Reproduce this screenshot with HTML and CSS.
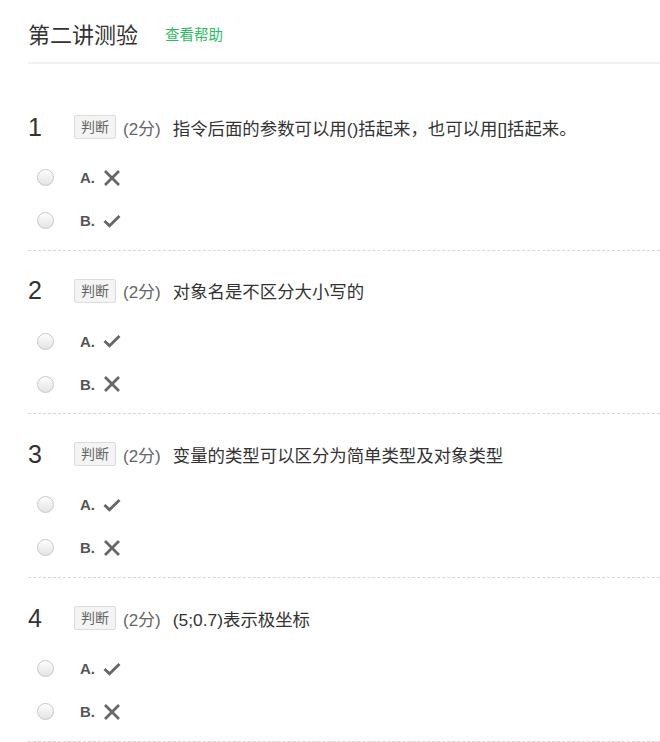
FILE: index.html
```html
<!DOCTYPE html>
<html lang="zh-CN">
  <head>
    <meta charset="UTF-8" />
    <meta name="viewport" content="width=device-width, initial-scale=1.0" />
    <title>第二讲测验</title>
    <link rel="stylesheet" href="styles.css">
  </head>
  <body>
    <div class="page">
      <div class="header">
        <h2 class="title">第二讲测验</h2>
        <a class="help" href="#">查看帮助</a>
      </div>

      <div class="list">
        <div class="question">
          <div class="q-head">
            <span class="q-num">1</span>
            <span class="tag">判断</span>
            <span class="score">(2分)</span>
            <span class="q-text">指令后面的参数可以用()括起来，也可以用[]括起来。</span>
          </div>
          <div class="option">
            <span class="radio"></span><span class="opt-label">A.</span>
            <svg class="icon" viewBox="0 0 20 20"><path d="M3 3L17 17M17 3L3 17" /></svg>
          </div>
          <div class="option">
            <span class="radio"></span><span class="opt-label">B.</span>
            <svg class="icon" viewBox="0 0 20 20"><path d="M2.5 10L7.5 14.8L17.5 5" /></svg>
          </div>
        </div>

        <div class="question">
          <div class="q-head">
            <span class="q-num">2</span>
            <span class="tag">判断</span>
            <span class="score">(2分)</span>
            <span class="q-text">对象名是不区分大小写的</span>
          </div>
          <div class="option">
            <span class="radio"></span><span class="opt-label">A.</span>
            <svg class="icon" viewBox="0 0 20 20"><path d="M2.5 10L7.5 14.8L17.5 5" /></svg>
          </div>
          <div class="option">
            <span class="radio"></span><span class="opt-label">B.</span>
            <svg class="icon" viewBox="0 0 20 20"><path d="M3 3L17 17M17 3L3 17" /></svg>
          </div>
        </div>

        <div class="question">
          <div class="q-head">
            <span class="q-num">3</span>
            <span class="tag">判断</span>
            <span class="score">(2分)</span>
            <span class="q-text">变量的类型可以区分为简单类型及对象类型</span>
          </div>
          <div class="option">
            <span class="radio"></span><span class="opt-label">A.</span>
            <svg class="icon" viewBox="0 0 20 20"><path d="M2.5 10L7.5 14.8L17.5 5" /></svg>
          </div>
          <div class="option">
            <span class="radio"></span><span class="opt-label">B.</span>
            <svg class="icon" viewBox="0 0 20 20"><path d="M3 3L17 17M17 3L3 17" /></svg>
          </div>
        </div>

        <div class="question">
          <div class="q-head">
            <span class="q-num">4</span>
            <span class="tag">判断</span>
            <span class="score">(2分)</span>
            <span class="q-text">(5;0.7)表示极坐标</span>
          </div>
          <div class="option">
            <span class="radio"></span><span class="opt-label">A.</span>
            <svg class="icon" viewBox="0 0 20 20"><path d="M2.5 10L7.5 14.8L17.5 5" /></svg>
          </div>
          <div class="option">
            <span class="radio"></span><span class="opt-label">B.</span>
            <svg class="icon" viewBox="0 0 20 20"><path d="M3 3L17 17M17 3L3 17" /></svg>
          </div>
        </div>
      </div>
    </div>
  </body>
</html>
```

FILE: styles.css
```css
body {
  margin: 0;
  background: #fff;
  font-family: "Liberation Sans", "Noto Sans CJK SC", sans-serif;
  color: #333;
}
.page {
  padding-left: 28px;
}
.header {
  height: 64px;
  display: flex;
  align-items: center;
  padding-top: 4px;
  box-sizing: border-box;
  border-bottom: 2px solid #f2f2f2;
}
.title {
  margin: 0;
  font-size: 22px;
  font-weight: normal;
  color: #333;
}
.help {
  margin-left: 27px;
  font-size: 14.5px;
  color: #2bbd5f;
  text-decoration: none;
}
.list {
  margin-top: 23px;
}
.question {
  height: 163.7px;
  box-sizing: border-box;
  padding-top: 26px;
  border-bottom: 1px dashed #d8d8d8;
}
.q-head {
  display: flex;
  align-items: center;
  height: 28px;
  margin-bottom: 15px;
}
.q-num {
  width: 46px;
  font-size: 25px;
  color: #333;
}
.tag {
  box-sizing: border-box;
  height: 24px;
  line-height: 22px;
  padding: 0 6px;
  border: 1px solid #dcdcdc;
  border-radius: 2px;
  background: #f4f4f4;
  font-size: 14px;
  color: #666;
}
.score {
  margin-left: 7px;
  font-size: 17px;
  color: #666;
}
.q-text {
  margin-left: 12px;
  font-size: 17.4px;
  color: #333;
}
.option {
  display: flex;
  align-items: center;
  height: 43px;
}
.radio {
  box-sizing: border-box;
  width: 17px;
  height: 17px;
  margin-left: 9px;
  border: 1px solid #c8c8c8;
  border-radius: 50%;
  background: linear-gradient(#fdfdfd, #e4e4e4);
}
.opt-label {
  margin-left: 26px;
  font-size: 15px;
  font-weight: bold;
  color: #555;
}
.icon {
  width: 20px;
  height: 20px;
  margin-left: 7px;
  fill: none;
  stroke: #666;
  stroke-width: 2.8;
}
```
